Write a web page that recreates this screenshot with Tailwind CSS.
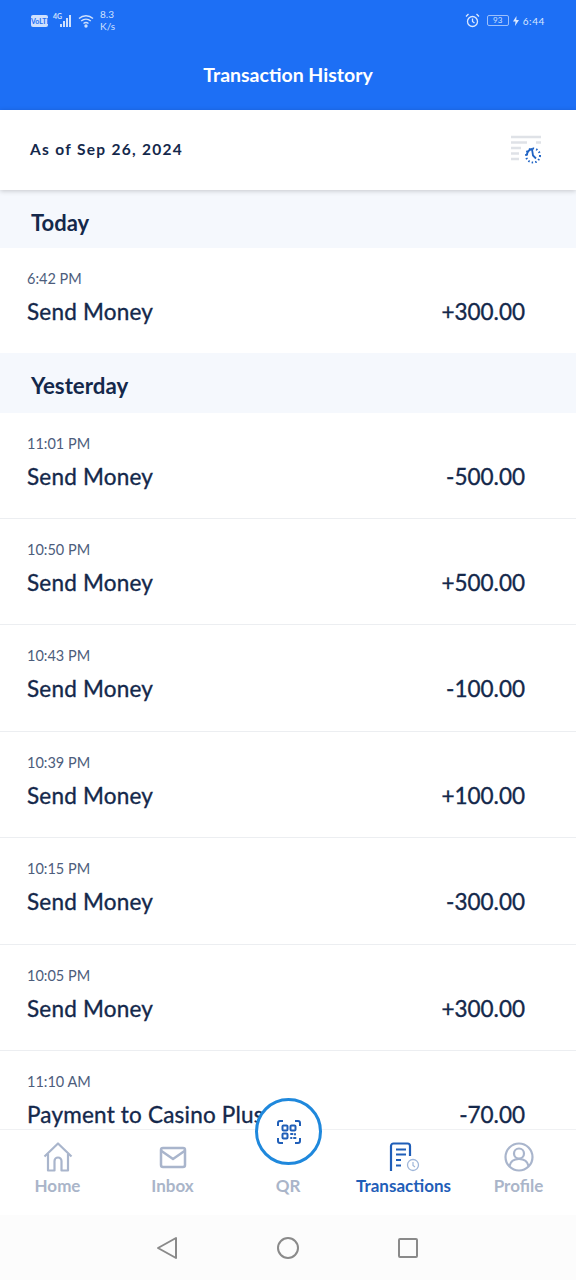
<!DOCTYPE html>
<html lang="en">
<head>
<meta charset="UTF-8">
<meta name="viewport" content="width=device-width, initial-scale=1.0">
<title>Transaction History</title>
<script src="https://cdn.jsdelivr.net/npm/@tailwindcss/browser@4"></script>
</head>
<body class="bg-white font-['Lato',sans-serif] text-[#14284b]">
<div class="relative w-[576px] h-[1280px] overflow-hidden flex flex-col">

  <!-- blue header -->
  <header class="bg-[#1d6ff5] h-[110px] shrink-0 text-white">
    <div class="h-[42px] pl-[31px] pr-[31px] pt-[9px] flex justify-between items-start">
      <div class="flex items-center gap-[4px]">
        <span class="w-[17px] h-[12px] rounded-[2px] bg-[#cfe0fd] text-[#1d6ff5] text-[7px] leading-[12px] font-bold text-center">VoLTE</span>
        <div class="relative w-[22px] h-[14px]">
          <span class="absolute left-[1px] -top-[2px] text-[7px] leading-[8px] font-bold text-[#cfe0fd]">4G</span>
          <svg class="absolute left-0 top-0" width="22" height="14" viewBox="0 0 22 14" fill="#cfe0fd"><rect x="8" y="10" width="2" height="3"/><rect x="11" y="7" width="2" height="6"/><rect x="14" y="4" width="2" height="9"/><rect x="17" y="1" width="2" height="12"/></svg>
        </div>
        <svg width="16" height="14" viewBox="0 0 16 14" fill="none" stroke="#cfe0fd" stroke-width="1.4"><path d="M1 4.500c4-3.600 10-3.600 14 0M3.200 7c2.800-2.400 6.800-2.400 9.600 0M5.500 9.500c1.500-1.200 3.500-1.200 5 0"/><circle cx="8" cy="12" r="1" fill="#cfe0fd"/></svg>
        <div class="text-[10px] leading-[12px] text-[#cfe0fd] ml-[2px] -mt-[1px]">8.3<br>K/s</div>
      </div>
      <div class="flex items-center gap-[4px] pt-[4px]">
        <svg width="15" height="15" viewBox="0 0 15 15" fill="none" stroke="#dbe8fe" stroke-width="1.3"><circle cx="7.500" cy="8.500" r="5"/><path d="M7.500 5.500v3l2 1.500M1 3.500 3.500 1M14 3.500 11.500 1"/></svg>
        <span class="ml-[3px] w-[22px] h-[11px] rounded-[2px] border border-[#9dc0fb] text-[8px] leading-[9px] text-center text-[#cfe0fd]">93</span>
        <svg width="6" height="10" viewBox="0 0 6 10" fill="#dbe8fe"><path d="M3.500 0 0 5.500h2.500L2 10l4-6H3.300z"/></svg>
        <span class="text-[10px] leading-[12px] tracking-[0.6px] text-[#dbe8fe]">6:44</span>
      </div>
    </div>
    <h1 class="text-center text-[19.500px] leading-[24px] font-bold mt-[21px]">Transaction History</h1>
  </header>

  <!-- as of bar -->
  <div class="relative z-10 h-[80px] shrink-0 bg-white shadow-[0_1px_5px_rgba(0,0,0,0.2)] pl-[30px] pr-[34px] flex items-center justify-between">
    <span class="text-[15.500px] font-bold tracking-[1.300px]">As of Sep 26, 2024</span>
    <svg width="32" height="30" viewBox="0 0 32 30" fill="none">
      <path d="M1 2h30M1 7.500h16M26 7.500h5M1 13h10M1 18.500h8M1 24h8" stroke="#dfe2e7" stroke-width="2.500"/>
      <circle cx="23" cy="20.500" r="7" stroke="#1f63c4" stroke-width="2" stroke-dasharray="1.500 2.100"/>
      <path d="M17 20.500a6.500 6.500 0 0 1 5-6.500l1 6.500 3 3" stroke="#1f63c4" stroke-width="1.800"/>
    </svg>
  </div>

  <!-- list -->
  <main class="flex-1 min-h-0 overflow-hidden">
    <div class="bg-[#f5f8fd] h-[58px] pl-[31px] pt-[6px] flex items-center text-[22px] font-bold">Today</div>
    <div class="h-[105px] pl-[27px] pr-[51px] pt-[22px]">
      <div class="text-[14.500px] leading-[18px] text-[#4d5d7c]">6:42 PM</div>
      <div class="mt-[10px] flex justify-between text-[22.500px] leading-[28px] [-webkit-text-stroke:0.35px_#14284b]"><span class="tracking-[0.2px]">Send Money</span><span>+300.00</span></div>
    </div>
    <div class="bg-[#f5f8fd] h-[60px] pl-[31px] pt-[6px] flex items-center text-[22.300px] font-bold">Yesterday</div>
    <div class="h-[106px] pl-[27px] pr-[51px] pt-[22px] border-b border-[#eceef1]">
      <div class="text-[14.500px] leading-[18px] text-[#4d5d7c]">11:01 PM</div>
      <div class="mt-[10px] flex justify-between text-[22.500px] leading-[28px] [-webkit-text-stroke:0.35px_#14284b]"><span class="tracking-[0.2px]">Send Money</span><span>-500.00</span></div>
    </div>
    <div class="h-[106.400px] pl-[27px] pr-[51px] pt-[22px] border-b border-[#eceef1]">
      <div class="text-[14.500px] leading-[18px] text-[#4d5d7c]">10:50 PM</div>
      <div class="mt-[10px] flex justify-between text-[22.500px] leading-[28px] [-webkit-text-stroke:0.35px_#14284b]"><span class="tracking-[0.2px]">Send Money</span><span>+500.00</span></div>
    </div>
    <div class="h-[106.400px] pl-[27px] pr-[51px] pt-[22px] border-b border-[#eceef1]">
      <div class="text-[14.500px] leading-[18px] text-[#4d5d7c]">10:43 PM</div>
      <div class="mt-[10px] flex justify-between text-[22.500px] leading-[28px] [-webkit-text-stroke:0.35px_#14284b]"><span class="tracking-[0.2px]">Send Money</span><span>-100.00</span></div>
    </div>
    <div class="h-[106.400px] pl-[27px] pr-[51px] pt-[22px] border-b border-[#eceef1]">
      <div class="text-[14.500px] leading-[18px] text-[#4d5d7c]">10:39 PM</div>
      <div class="mt-[10px] flex justify-between text-[22.500px] leading-[28px] [-webkit-text-stroke:0.35px_#14284b]"><span class="tracking-[0.2px]">Send Money</span><span>+100.00</span></div>
    </div>
    <div class="h-[106.400px] pl-[27px] pr-[51px] pt-[22px] border-b border-[#eceef1]">
      <div class="text-[14.500px] leading-[18px] text-[#4d5d7c]">10:15 PM</div>
      <div class="mt-[10px] flex justify-between text-[22.500px] leading-[28px] [-webkit-text-stroke:0.35px_#14284b]"><span class="tracking-[0.2px]">Send Money</span><span>-300.00</span></div>
    </div>
    <div class="h-[106.400px] pl-[27px] pr-[51px] pt-[22px] border-b border-[#eceef1]">
      <div class="text-[14.500px] leading-[18px] text-[#4d5d7c]">10:05 PM</div>
      <div class="mt-[10px] flex justify-between text-[22.500px] leading-[28px] [-webkit-text-stroke:0.35px_#14284b]"><span class="tracking-[0.2px]">Send Money</span><span>+300.00</span></div>
    </div>
    <div class="h-[106.400px] pl-[27px] pr-[51px] pt-[22px]">
      <div class="text-[14.500px] leading-[18px] text-[#4d5d7c]">11:10 AM</div>
      <div class="mt-[10px] flex justify-between text-[22.500px] leading-[28px] [-webkit-text-stroke:0.35px_#14284b]"><span class="tracking-[0.2px]">Payment to Casino Plus</span><span>-70.00</span></div>
    </div>
  </main>

  <!-- bottom tabs -->
  <nav class="relative z-10 h-[86px] shrink-0 bg-white border-t border-[#f0f1f3] grid grid-cols-[115px_115px_116px_115px_115px] text-[17px] font-bold text-[#aab5c9] text-center">
    <div class="flex flex-col items-center pt-[12px]">
      <svg width="30" height="30" viewBox="0 0 30 30" fill="none" stroke="#a9b5cc" stroke-width="2.2" stroke-linejoin="round"><path d="M1.500 14.500 15 1.500l13.500 13"/><path d="M5 12v16.500h6.500V19a3.500 3.500 0 0 1 7 0v9.500H25V12"/></svg>
      <span class="mt-[1px]">Home</span>
    </div>
    <div class="flex flex-col items-center pt-[12px]">
      <svg width="30" height="30" viewBox="0 0 30 30" fill="none" stroke="#a9b5cc" stroke-width="2.5" stroke-linejoin="round"><rect x="3" y="6" width="24" height="19" rx="2"/><path d="m3.500 9 11.500 8 11.500-8"/></svg>
      <span class="mt-[1px]">Inbox</span>
    </div>
    <div class="flex flex-col items-center pt-[12px]">
      <div class="h-[30px]"></div>
      <span class="mt-[1px]">QR</span>
    </div>
    <div class="flex flex-col items-center pt-[12px] text-[#1f5eb8]">
      <svg width="32" height="30" viewBox="0 0 32 30" fill="none" stroke="#1f5eb8" stroke-width="2.2"><path d="M3 29V4a2.500 2.500 0 0 1 2.500-2.500h14A2.500 2.500 0 0 1 22 4v10"/><path d="M8 7.500h10M8 12.500h10M8 18h5M8 23.500h5"/><circle cx="25" cy="23" r="5.500" stroke="#9fb6d9" stroke-width="1.3"/><path d="M25 20v3.500l2 1.500" stroke="#9fb6d9" stroke-width="1.2"/></svg>
      <span class="mt-[1px]">Transactions</span>
    </div>
    <div class="flex flex-col items-center pt-[12px]">
      <svg width="30" height="30" viewBox="0 0 30 30" fill="none" stroke="#a9b5cc" stroke-width="2.2"><circle cx="15" cy="15" r="13.500"/><circle cx="15" cy="11.500" r="5"/><path d="M5.500 24c1-5 5-7 9.500-7s8.500 2 9.500 7"/></svg>
      <span class="mt-[1px]">Profile</span>
    </div>
  </nav>

  <!-- qr button sits over the tabs and list -->
  <div class="absolute z-20 left-[255px] top-[1098px] w-[67px] h-[67px] rounded-full bg-white border-[3.500px] border-[#1f88dc] flex items-center justify-center">
    <svg width="26" height="26" viewBox="0 0 26 26" fill="none" stroke="#1f5eb8" stroke-width="2"><path d="M7 2H4a2 2 0 0 0-2 2v3M19 2h3a2 2 0 0 1 2 2v3M7 24H4a2 2 0 0 1-2-2v-3M24 19v3a2 2 0 0 1-2 2h-3"/><rect x="6.500" y="6.500" width="5" height="5" rx="1"/><rect x="14.500" y="6.500" width="5" height="5" rx="1"/><rect x="6.500" y="14.500" width="5" height="5" rx="1"/><path d="M15 15h1.500M19 15v.5M15 19h.5M18 19h1.500" stroke-linecap="round"/></svg>
  </div>

  <!-- android nav -->
  <div class="h-[65px] shrink-0 bg-[#fcfcfc] pl-[156px] pr-[158px] flex items-center justify-between pt-[1px]">
    <svg width="22" height="24" viewBox="0 0 22 24" fill="none" stroke="#8a8a8a" stroke-width="2" stroke-linejoin="round"><path d="M20 2v20L2 12z"/></svg>
    <svg width="24" height="24" viewBox="0 0 24 24" fill="none" stroke="#8a8a8a" stroke-width="2"><circle cx="12" cy="12" r="10"/></svg>
    <svg width="20" height="20" viewBox="0 0 20 20" fill="none" stroke="#8a8a8a" stroke-width="2"><rect x="1" y="1" width="18" height="18" rx="1"/></svg>
  </div>
</div>
</body>
</html>
